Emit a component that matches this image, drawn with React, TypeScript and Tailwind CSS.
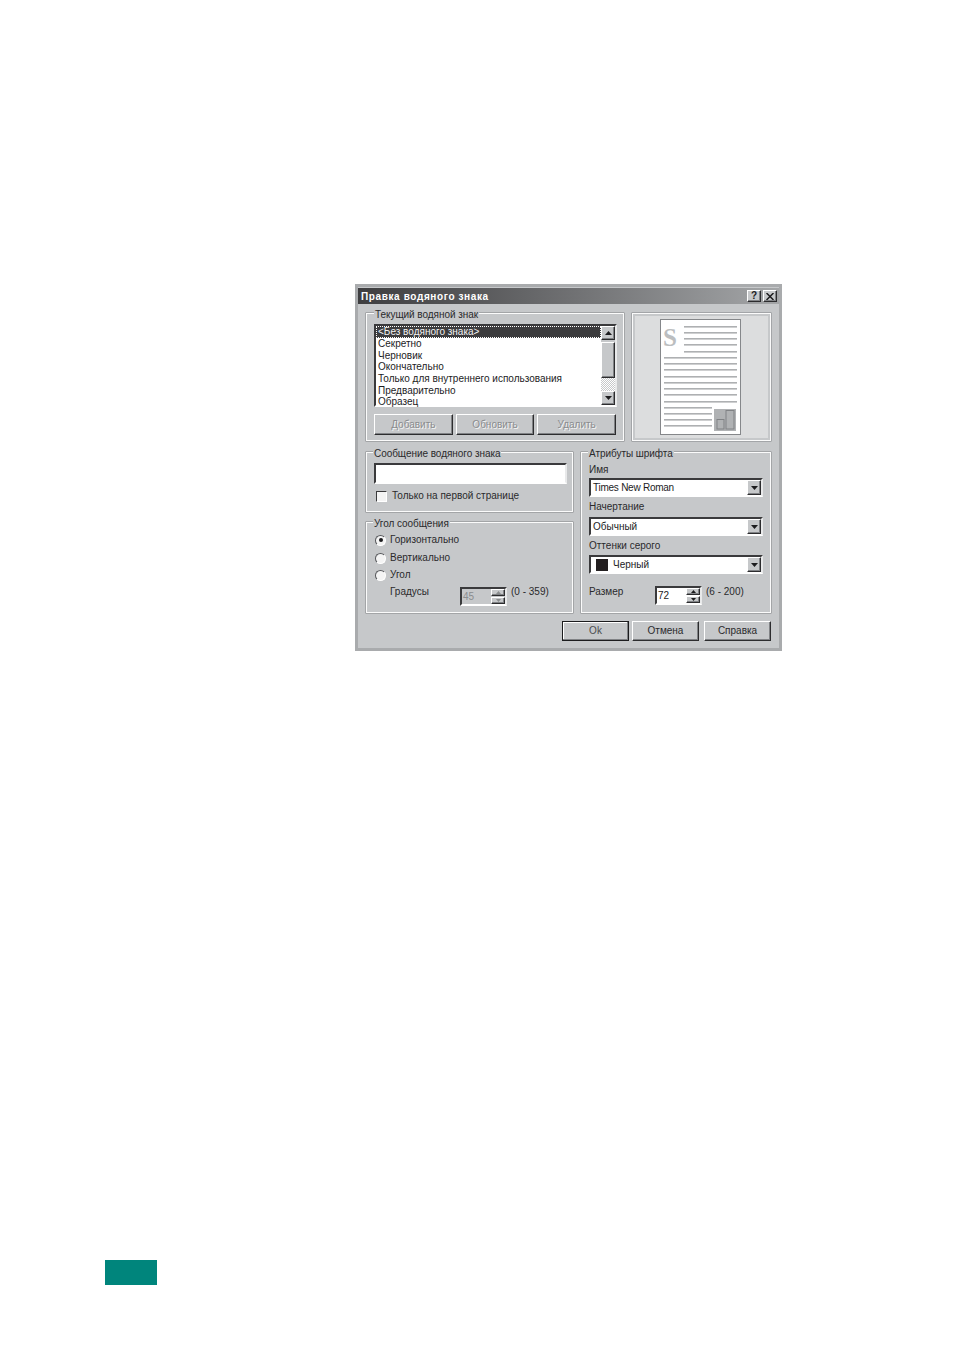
import React from 'react';

const raised = 'border border-t-white border-l-white border-r-[#2c2c2e] border-b-[#2c2c2e] shadow-[inset_-1px_-1px_0_#808285]';
const sunken = 'border-2 border-t-[#3a3a3c] border-l-[#3a3a3c] border-r-[#e8e9ea] border-b-white';
const disabledText = 'text-[#8a8c8e] [text-shadow:1px_1px_0_#f4f4f4]';

const Group: React.FC<{ title: string; className: string; titleClass?: string; children: React.ReactNode }> = ({ title, className, titleClass = 'left-[6px]', children }) => (
  <div className={`relative border border-[#fbfbfb] shadow-[inset_0_0_0_1px_#c6c8ca,0_0_0_0.5px_#808285] ${className}`}>
    <span className={`absolute top-[-5px] bg-[#c6c8ca] px-[1px] leading-[12px] tracking-[-0.05px] text-[#2a2a2c] ${titleClass}`}>{title}</span>
    {children}
  </div>
);

const Arrow: React.FC<{ up?: boolean; small?: boolean; color?: string }> = ({ up, small, color = '#1c1c1e' }) => (
  <svg width={small ? 5 : 7} height={small ? 3 : 4} viewBox="0 0 7 4">
    <path d={up ? 'M3.5 0L7 4H0Z' : 'M0 0H7L3.5 4Z'} fill={color} />
  </svg>
);

const Combo: React.FC<{ children: React.ReactNode }> = ({ children }) => (
  <div className={`flex h-[19px] w-[174px] items-center justify-between bg-white pl-[2px] ${sunken}`}>
    <div className="flex items-center text-[#1c1c1e]">{children}</div>
    <div className={`flex h-[15px] w-[14px] items-center justify-center bg-[#c6c8ca] ${raised}`}>
      <Arrow />
    </div>
  </div>
);

const Spin: React.FC<{ value: string; disabled?: boolean }> = ({ value, disabled }) => (
  <div className={`flex h-[19px] w-[47px] items-center justify-between pl-[1px] ${sunken} ${disabled ? 'bg-[#c6c8ca] text-[#8a8c8e]' : 'bg-white text-[#1c1c1e]'}`}>
    <span>{value}</span>
    <div className="flex w-[14px] flex-col gap-[1px]">
      <div className={`flex h-[7px] items-center justify-center bg-[#c6c8ca] ${raised}`}>
        <Arrow up small color={disabled ? '#8a8c8e' : '#1c1c1e'} />
      </div>
      <div className={`flex h-[7px] items-center justify-center bg-[#c6c8ca] ${raised}`}>
        <Arrow small color={disabled ? '#8a8c8e' : '#1c1c1e'} />
      </div>
    </div>
  </div>
);

const Radio: React.FC<{ checked?: boolean; label: string; className: string }> = ({ checked, label, className }) => (
  <div className={`flex items-center gap-[4px] ${className}`}>
    <div className="flex h-[11px] w-[11px] items-center justify-center rounded-full border border-t-[#55575a] border-l-[#55575a] border-r-white border-b-white bg-[#f4f4f4]">
      {checked && <div className="h-[4px] w-[4px] rounded-full bg-[#1c1c1e]" />}
    </div>
    <span className="text-[#2a2a2c]">{label}</span>
  </div>
);

const listItems = ['Секретно', 'Черновик', 'Окончательно', 'Только для внутреннего использования', 'Предварительно', 'Образец'];

const PageSketch = () => (
  <svg width="81" height="116" viewBox="660 319 81 116" className="block">
    <rect x="660.5" y="319.5" width="80" height="115" fill="#fff" stroke="#85878a" />
    <text x="663" y="346" fontFamily="'Liberation Serif', serif" fontWeight="700" fontSize="25" fill="#bcbec0">S</text>
    {[326, 332, 338, 344, 351].map(y => <rect key={y} x="684" y={y} width="53" height="1.6" fill="#aeb0b2" />)}
    {[357, 363, 369, 376, 382, 388, 394, 401].map(y => <rect key={y} x="664" y={y} width="73" height="1.6" fill="#aeb0b2" />)}
    {[407, 413, 419, 425].map(y => <rect key={y} x="664" y={y} width="48" height="1.6" fill="#aeb0b2" />)}
    <rect x="714" y="409" width="22" height="22" fill="#b0b2b4" />
    <rect x="717" y="419.5" width="7" height="9.5" fill="none" stroke="#808285" />
    <rect x="726" y="410.5" width="8" height="18.5" fill="none" stroke="#808285" />
  </svg>
);

export default function App() {
  return (
    <div className="h-[1348px] w-[954px] overflow-hidden bg-white pl-[105px] pt-[284px] font-['Liberation_Sans',sans-serif] text-[10px] leading-[12px]">
      <div className="ml-[250px] h-[367px] w-[427px] border-[3px] border-[#a9abad] bg-[#c6c8ca] pt-[1px]">
        {/* Title bar */}
        <div className="flex h-[16px] items-center justify-between bg-gradient-to-r from-[#3e3e40] to-[#a4a6a8] pl-[3px] pr-[2px]">
          <span className="pt-[1px] text-[10px] font-bold tracking-[0.62px] text-white">Правка водяного знака</span>
          <div className="flex gap-[2px]">
            <div className={`flex h-[12px] w-[14px] items-center justify-center bg-[#c6c8ca] text-[10px] font-bold text-[#1c1c1e] ${raised}`}>?</div>
            <div className={`flex h-[12px] w-[14px] items-center justify-center bg-[#c6c8ca] ${raised}`}>
              <svg width="8" height="7" viewBox="0 0 8 7"><path d="M0.5 0L7.5 7M7.5 0L0.5 7" stroke="#1c1c1e" strokeWidth="1.5" /></svg>
            </div>
          </div>
        </div>

        <div className="px-[8px] pt-[9px]">
          {/* Top row */}
          <div className="flex gap-[8px]">
            <Group title="Текущий водяной знак" titleClass="left-[7px]" className="h-[128px] w-[258px] px-[7px] pt-[10px]">
              <div className={`flex h-[83px] w-[243px] bg-white ${sunken}`}>
                <div className="flex-1 leading-[11.65px] text-[#1c1c1e]">
                  <div className="h-[12px] border border-dotted border-white bg-[#3c3c3e] pl-[1px] leading-[10px] text-[#f2f2f2]">&lt;Без водяного знака&gt;</div>
                  {listItems.map(item => <div key={item} className="pl-[2px]">{item}</div>)}
                </div>
                <div className="flex w-[14px] flex-col bg-[#c6c8ca]">
                  <div className={`flex h-[14px] items-center justify-center bg-[#c6c8ca] ${raised}`}><Arrow up /></div>
                  <div className={`mt-[2px] h-[37px] bg-[#c6c8ca] ${raised}`} />
                  <div className="h-[14px] bg-[repeating-conic-gradient(#ffffff_0_25%,#c6c8ca_0_50%)] bg-[length:2px_2px]" />
                  <div className={`flex h-[14px] items-center justify-center bg-[#c6c8ca] ${raised}`}><Arrow /></div>
                </div>
              </div>
              <div className="mt-[7px] flex gap-[3px]">
                {['Добавить', 'Обновить', 'Удалить'].map(label => (
                  <div key={label} className={`flex h-[21px] w-[79px] items-center justify-center bg-[#c6c8ca] ${raised} ${disabledText}`}>{label}</div>
                ))}
              </div>
            </Group>
            <div className="h-[128px] w-[139px] border border-[#fbfbfb] bg-[#dcddde] pl-[27px] pt-[5px] shadow-[0_0_0_0.5px_#808285,inset_0_0_0_2px_#c6c8ca]">
              <PageSketch />
            </div>
          </div>

          {/* Middle row */}
          <div className="mt-[11px] flex gap-[8px]">
            <div className="flex w-[207px] flex-col gap-[10px]">
              <Group title="Сообщение водяного знака" className="h-[60px] px-[7px] pt-[10px]">
                <div className={`h-[21px] w-[193px] bg-white ${sunken}`} />
                <div className="ml-[2px] mt-[6px] flex items-center gap-[5px]">
                  <div className="h-[11px] w-[11px] border border-t-[#3a3a3c] border-l-[#3a3a3c] border-r-white border-b-white bg-[#f4f4f4]" />
                  <span className="text-[#2a2a2c]">Только на первой странице</span>
                </div>
              </Group>
              <Group title="Угол сообщения" className="h-[91px] pl-[8px] pt-[11px]">
                <Radio checked label="Горизонтально" className="h-[12px]" />
                <Radio label="Вертикально" className="mt-[6px] h-[12px]" />
                <Radio label="Угол" className="mt-[5px] h-[12px]" />
                <div className="ml-[15px] mt-[6px] flex items-start text-[#2a2a2c]">
                  <span className="mt-[-1px] w-[70px]">Градусы</span>
                  <Spin value="45" disabled />
                  <span className="ml-[4px] mt-[-1px]">(0 - 359)</span>
                </div>
              </Group>
            </div>
            <Group title="Атрибуты шрифта" className="h-[161px] w-[190px] px-[7px] pt-[11px] text-[#2a2a2c]">
              <div>Имя</div>
              <div className="mt-[2px]"><Combo><span className="tracking-[-0.25px]">Times New Roman</span></Combo></div>
              <div className="mt-[4px]">Начертание</div>
              <div className="mt-[4px]"><Combo>Обычный</Combo></div>
              <div className="mt-[4px]">Оттенки серого</div>
              <div className="mt-[3px]">
                <Combo>
                  <span className="ml-[3px] mr-[5px] inline-block h-[12px] w-[12px] bg-[#231f20]" />
                  Черный
                </Combo>
              </div>
              <div className="mt-[12px] flex items-start">
                <span className="w-[66px]">Размер</span>
                <Spin value="72" />
                <span className="ml-[4px]">(6 - 200)</span>
              </div>
            </Group>
          </div>

          {/* Bottom buttons */}
          <div className="mt-[8px] flex justify-end text-[#2a2a2c]">
            <div className="flex h-[20px] w-[67px] items-center justify-center border border-[#1c1c1e] bg-[#c6c8ca] text-[#4a4c4e] shadow-[inset_-1px_-1px_0_#808285,inset_1px_1px_0_#fff]">Ok</div>
            <div className={`ml-[3px] flex h-[20px] w-[67px] items-center justify-center bg-[#c6c8ca] ${raised}`}>Отмена</div>
            <div className={`ml-[5px] flex h-[20px] w-[67px] items-center justify-center bg-[#c6c8ca] ${raised}`}>Справка</div>
          </div>
        </div>
      </div>

      {/* Page number tab */}
      <div className="mt-[609px] h-[25px] w-[52px] bg-[#00857c]" />
    </div>
  );
}
